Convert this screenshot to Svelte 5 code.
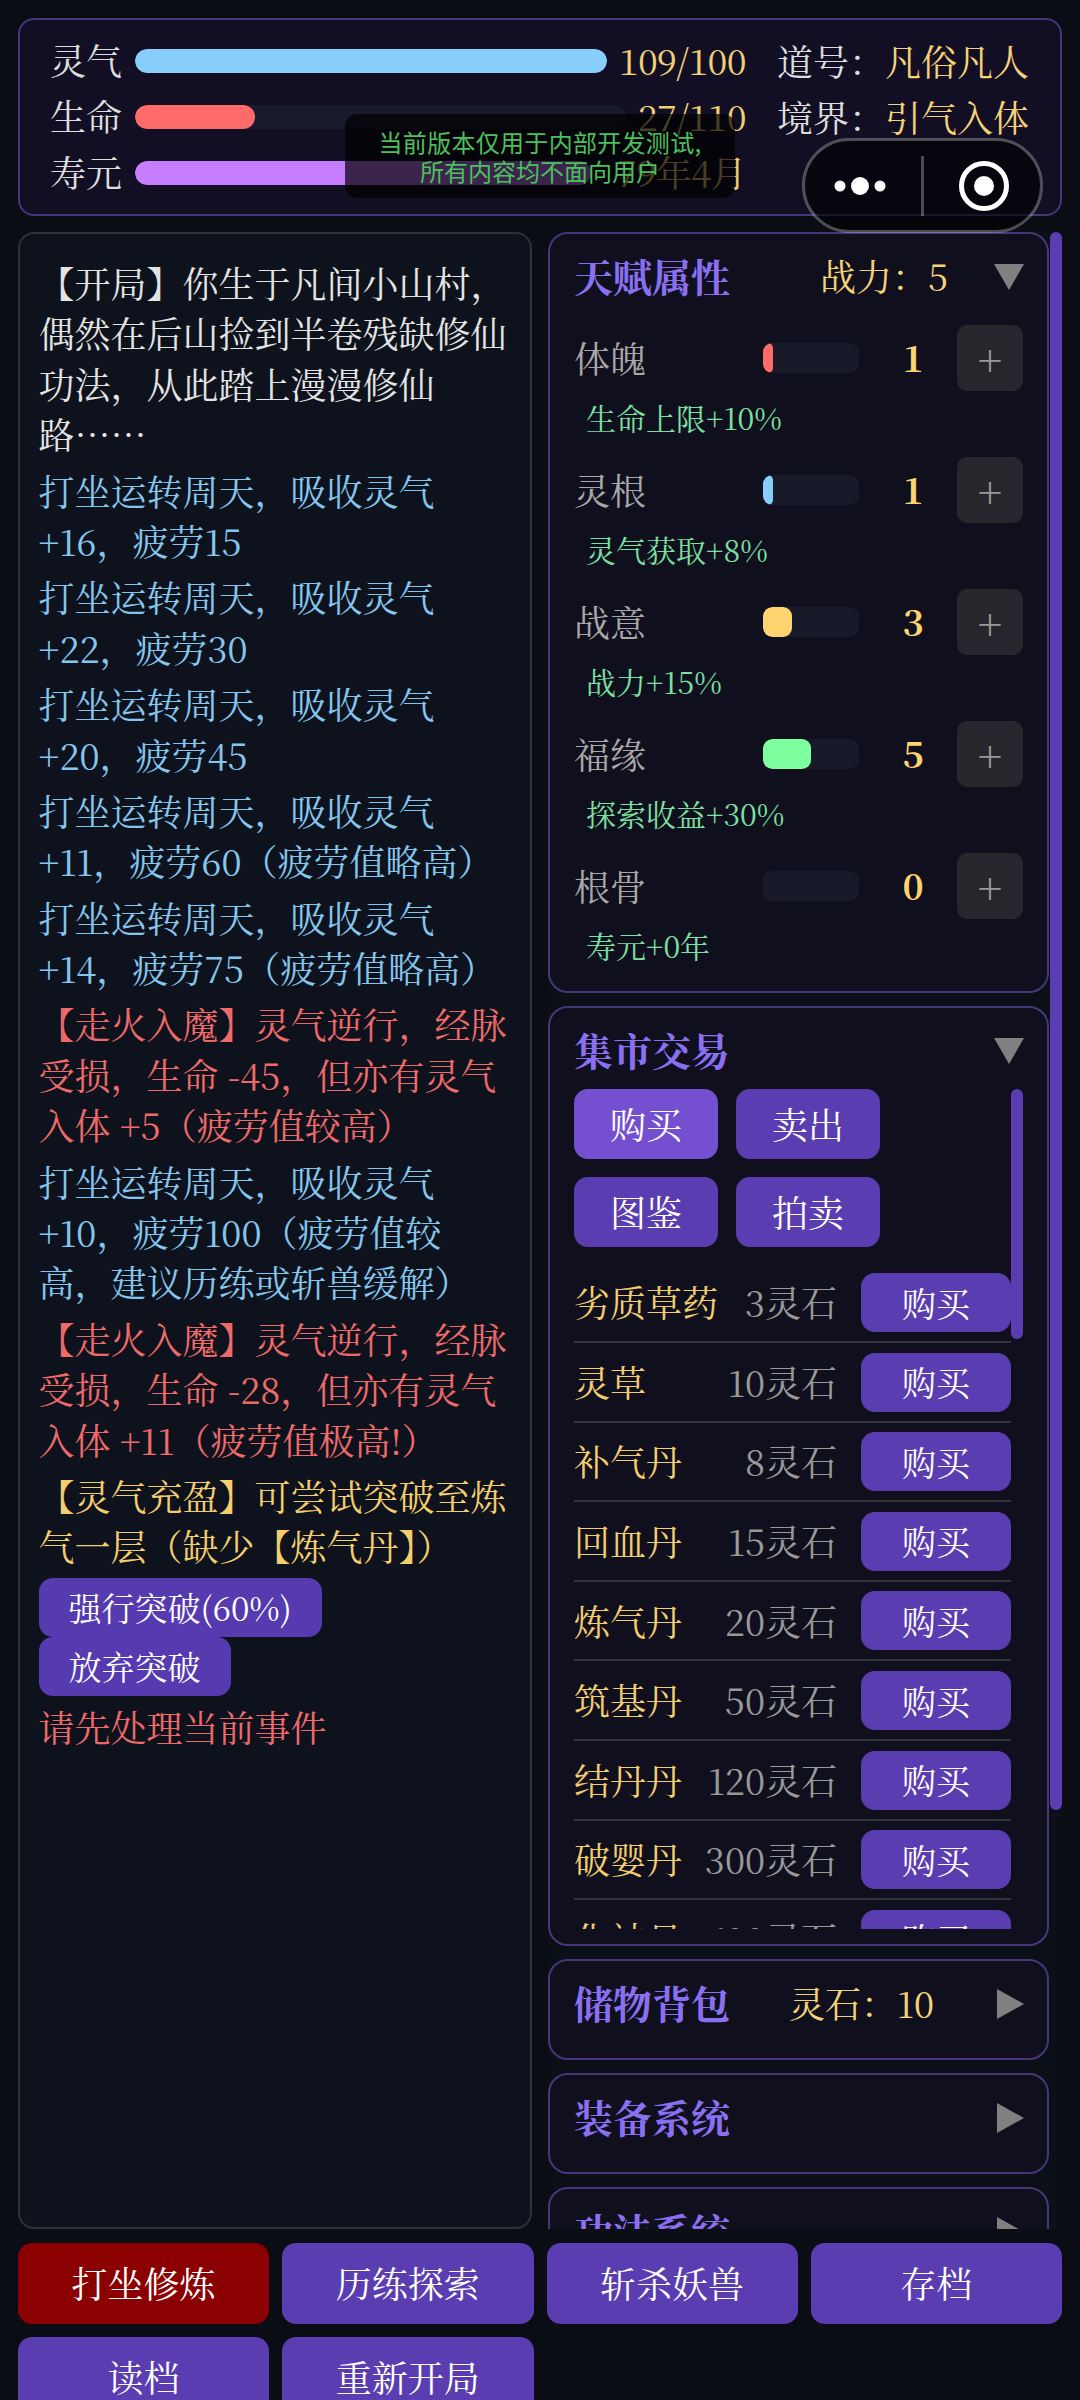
<script>
  const stats = [
    { name: '灵气', cls: 'qi', pct: 100, val: '109/100' },
    { name: '生命', cls: 'hp', pct: 24.5, val: '27/110' },
    { name: '寿元', cls: 'life', pct: 97, val: '79年4月' }
  ];
  const attrs = [
    { name: '体魄', color: '#ff6b6b', v: 1, fx: '生命上限+10%' },
    { name: '灵根', color: '#87cefa', v: 1, fx: '灵气获取+8%' },
    { name: '战意', color: '#ffd470', v: 3, fx: '战力+15%' },
    { name: '福缘', color: '#7dffa0', v: 5, fx: '探索收益+30%' },
    { name: '根骨', color: '#c77dff', v: 0, fx: '寿元+0年' }
  ];
  const goods = [
    ['劣质草药', 3], ['灵草', 10], ['补气丹', 8], ['回血丹', 15], ['炼气丹', 20],
    ['筑基丹', 50], ['结丹丹', 120], ['破婴丹', 300], ['化神丹', 600]
  ];
  const logs = [
    ['w', '【开局】你生于凡间小山村，偶然在后山捡到半卷残缺修仙功法，从此踏上漫漫修仙路……'],
    ['b', '打坐运转周天，吸收灵气+16，疲劳15'],
    ['b', '打坐运转周天，吸收灵气+22，疲劳30'],
    ['b', '打坐运转周天，吸收灵气+20，疲劳45'],
    ['b', '打坐运转周天，吸收灵气+11，疲劳60（疲劳值略高）'],
    ['b', '打坐运转周天，吸收灵气+14，疲劳75（疲劳值略高）'],
    ['r', '【走火入魔】灵气逆行，经脉受损，生命 -45，但亦有灵气入体 +5（疲劳值较高）'],
    ['b', '打坐运转周天，吸收灵气+10，疲劳100（疲劳值较高，建议历练或斩兽缓解）'],
    ['r', '【走火入魔】灵气逆行，经脉受损，生命 -28，但亦有灵气入体 +11（疲劳值极高!）'],
    ['g', '【灵气充盈】可尝试突破至炼气一层（缺少【炼气丹】）']
  ];
  const actions = ['打坐修炼', '历练探索', '斩杀妖兽', '存档', '读档', '重新开局'];
</script>

<div class="app">
  <header class="top">
    <div class="stats">
      {#each stats as s}
        <div class="stat">
          <span class="stat-name">{s.name}</span>
          <div class="track"><div class="fill {s.cls}" style="width:{s.pct}%"></div></div>
          <span class="stat-val">{s.val}</span>
        </div>
      {/each}
    </div>
    <div class="info">
      <div class="info-row"><span class="info-k">道号：</span><span class="gold">凡俗凡人</span></div>
      <div class="info-row"><span class="info-k">境界：</span><span class="gold">引气入体</span></div>
    </div>
  </header>

  <main class="main">
    <section class="log">
      {#each logs as l}
        <p class="line {l[0]}">{l[1]}</p>
      {/each}
      <div class="choices">
        <button class="choice">强行突破(60%)</button>
        <button class="choice">放弃突破</button>
      </div>
      <p class="line r">请先处理当前事件</p>
    </section>

    <section class="side">
      <div class="side-thumb"></div>

      <div class="panel attrs-panel">
        <div class="head">
          <h2>天赋属性</h2>
          <span class="gold head-gold power">战力：5</span>
          <svg class="tri-d" viewBox="0 0 30 26"><polygon points="0,0 30,0 15,26" /></svg>
        </div>
        {#each attrs as a}
          <div class="attr">
            <span class="attr-name">{a.name}</span>
            <div class="attr-track"><div class="attr-fill" style="width:{a.v * 10}%;background:{a.color}"></div></div>
            <span class="attr-val">{a.v}</span>
            <button class="plus">+</button>
          </div>
          <div class="fx">{a.fx}</div>
        {/each}
      </div>

      <div class="panel shop-panel">
        <div class="head">
          <h2>集市交易</h2>
          <svg class="tri-d" viewBox="0 0 30 26"><polygon points="0,0 30,0 15,26" /></svg>
        </div>
        <div class="shop">
          <div class="shop-thumb"></div>
          <div class="tabs">
            <button class="tab active">购买</button>
            <button class="tab">卖出</button>
            <button class="tab">图鉴</button>
            <button class="tab">拍卖</button>
          </div>
          <div class="goods">
            {#each goods as g}
              <div class="good">
                <span class="good-name">{g[0]}</span>
                <span class="good-price">{g[1]}灵石</span>
                <button class="buy">购买</button>
              </div>
            {/each}
          </div>
        </div>
      </div>

      <div class="panel closed">
        <div class="head">
          <h2>储物背包</h2>
          <span class="gold head-gold stones">灵石：10</span>
          <svg class="tri-r" viewBox="0 0 27 30"><polygon points="0,0 27,15 0,30" /></svg>
        </div>
      </div>
      <div class="panel closed">
        <div class="head">
          <h2>装备系统</h2>
          <svg class="tri-r" viewBox="0 0 27 30"><polygon points="0,0 27,15 0,30" /></svg>
        </div>
      </div>
      <div class="panel closed">
        <div class="head">
          <h2>功法系统</h2>
          <svg class="tri-r" viewBox="0 0 27 30"><polygon points="0,0 27,15 0,30" /></svg>
        </div>
      </div>
    </section>
  </main>

  <footer class="actions">
    {#each actions as a, i}
      <button class="action" class:hot={i === 0}>{a}</button>
    {/each}
  </footer>

  <div class="toast"><span class="toast-first">当前版本仅用于内部开发测试,</span><br />所有内容均不面向用户</div>

  <svg class="capsule" viewBox="0 0 241 95">
    <rect x="1.5" y="1.5" width="238" height="92" rx="46" fill="rgba(0,0,0,.6)" stroke="rgba(255,255,255,.28)" stroke-width="3" />
    <rect x="119" y="18" width="3" height="60" fill="rgba(255,255,255,.28)" />
    <circle cx="38" cy="48" r="5.5" fill="#fff" />
    <circle cx="58" cy="48" r="9" fill="#fff" />
    <circle cx="78" cy="48" r="5.5" fill="#fff" />
    <circle cx="182" cy="48" r="22.5" fill="none" stroke="#fff" stroke-width="5" />
    <circle cx="182" cy="48" r="10" fill="#fff" />
  </svg>
</div>

<style>
  :global(body) {
    margin: 0;
    background: #0a0d14;
  }
  .app {
    position: relative;
    width: 1080px;
    height: 2400px;
    overflow: hidden;
    box-sizing: border-box;
    padding: 18px 18px 0;
    background: #0a0d14;
    color: #e0e0e0;
    font-family: "Noto Serif CJK SC", "Noto Sans CJK SC", serif;
    font-size: 36px;
    line-height: 1.4;
  }
  button {
    font: inherit;
    color: #fff;
    border: 0;
    padding: 0;
    margin: 0;
    cursor: pointer;
  }
  p, h2 { margin: 0; }

  .top {
    box-sizing: border-box;
    height: 198px;
    padding: 16px 31px 16px 30px;
    display: flex;
    gap: 31px;
    background: #120f24;
    border: 2px solid #453779;
    border-radius: 16px;
  }
  .stats {
    flex: 1;
    display: flex;
    flex-direction: column;
    gap: 6px;
    min-width: 0;
  }
  .stat {
    display: flex;
    align-items: center;
    height: 50px;
  }
  .stat-name {
    width: 85px;
    flex: none;
    color: #ddd;
    padding-bottom: 2px;
  }
  .track {
    flex: 1;
    height: 24px;
    background: #1a1a2e;
    border-radius: 12px;
    overflow: hidden;
    margin-right: 12px;
  }
  .fill { height: 100%; border-radius: 12px; }
  .qi { background: #87cefa; }
  .hp { background: #ff6b6b; }
  .life { background: #c77dff; }
  .stat-val { color: #f0cf75; flex: none; letter-spacing: -0.6px; padding-bottom: 2px; }
  .info {
    flex: none;
    width: 252px;
    display: flex;
    flex-direction: column;
    gap: 6px;
  }
  .info-row {
    display: flex;
    height: 50px;
    white-space: nowrap;
  }
  .info-k { color: #ddd; }
  .gold { color: #f6d277; }

  .main {
    height: 1997px;
    margin-top: 16px;
    display: flex;
    gap: 16px;
  }
  .log {
    box-sizing: border-box;
    width: 514px;
    flex: none;
    padding: 24px 21px 24px 18.5px;
    background: #0e121c;
    border: 2px solid #2d3238;
    border-radius: 16px;
    overflow: hidden;
  }
  .line { margin-bottom: 6px; }
  .w { color: #e4e4e4; }
  .b { color: #84c6ee; }
  .r { color: #ee6a6a; }
  .g { color: #f3cd6e; }
  .choices {
    display: flex;
    flex-direction: column;
    align-items: flex-start;
    margin-bottom: 6px;
  }
  .choice {
    height: 59px;
    padding: 0 30px;
    background: #553ab0;
    border-radius: 14px;
    font-size: 33px;
  }

  .side {
    position: relative;
    width: 514px;
    flex: none;
    overflow: hidden;
    background: #0b0f17;
    padding-right: 13px;
    box-sizing: border-box;
    display: flex;
    flex-direction: column;
    gap: 13px;
  }
  .side-thumb {
    position: absolute;
    right: 0;
    top: 0;
    width: 12px;
    height: 1578px;
    background: #5a3db0;
    border-radius: 6px;
  }
  .panel {
    flex: none;
    box-sizing: border-box;
    padding: 23px 24px 25px;
    background: #0f0f1e;
    border: 2px solid #453779;
    border-radius: 20px;
  }
  .head {
    display: flex;
    align-items: center;
    height: 40px;
  }
  h2 {
    font-size: 39px;
    font-weight: 700;
    color: #8a70f0;
    line-height: 40px;
    flex: none;
    padding-bottom: 4px;
  }
  .head-gold { margin-left: auto; padding-bottom: 2px; }
  .power { margin-right: 46px; }
  .stones { margin-right: 63px; }
  .tri-d { width: 30px; height: 26px; flex: none; margin: 0 -1px 0 auto; fill: #808080; }
  .head-gold + .tri-d, .head-gold + .tri-r { margin-left: 0; }
  .tri-r { width: 27px; height: 30px; flex: none; margin: 0 -1px 0 auto; fill: #808080; }

  .attrs-panel { height: 761px; }
  .attrs-panel .head { margin-bottom: 28px; }
  .attr {
    display: flex;
    align-items: center;
    height: 66px;
  }
  .attr-name { width: 189px; color: #a8a8a8; flex: none; }
  .attr-track {
    width: 96px;
    height: 30px;
    background: #181a2a;
    border-radius: 9px;
    overflow: hidden;
    flex: none;
  }
  .attr-fill { height: 100%; border-radius: 9px; }
  .attr-val {
    flex: 1;
    text-align: center;
    padding: 0 0 2px 10px;
    font-weight: 700;
    color: #ffd470;
  }
  .plus {
    width: 66px;
    height: 66px;
    flex: none;
    background: #26272c;
    border-radius: 10px;
    color: #999;
    font-size: 42px;
    line-height: 62px;
  }
  .fx {
    height: 42px;
    margin: 5px 0 19px;
    padding-left: 12px;
    font-size: 30px;
    line-height: 42px;
    color: #7be0a0;
  }

  .shop-panel { height: 940px; padding-bottom: 15px; }
  .shop-panel .head { margin-bottom: 18px; }
  .shop {
    position: relative;
    height: 840px;
    overflow: hidden;
    padding-right: 12px;
  }
  .shop-thumb {
    position: absolute;
    right: 0;
    top: 0;
    width: 12px;
    height: 250px;
    background: #5a3db0;
    border-radius: 6px;
  }
  .tabs {
    display: grid;
    grid-template-columns: 144px 144px;
    gap: 18px;
  }
  .tab {
    height: 70px;
    background: #5a3db0;
    border-radius: 14px;
  }
  .tab.active { background: #7450d0; }
  .goods { margin-top: 26px; }
  .good {
    display: flex;
    align-items: center;
    padding-bottom: 9px;
    border-bottom: 2px solid #33343c;
    margin-bottom: 9.6px;
  }
  .good-name { color: #f3cd6e; white-space: nowrap; }
  .good-price {
    margin-left: auto;
    color: #999;
    white-space: nowrap;
  }
  .buy {
    width: 150px;
    height: 59px;
    margin-left: 24px;
    flex: none;
    background: #5a3db0;
    border-radius: 14px;
    font-size: 34px;
  }
  .closed { height: 101px; }

  .actions {
    margin-top: 14px;
    display: grid;
    grid-template-columns: repeat(4, 1fr);
    gap: 13px;
  }
  .action {
    height: 81px;
    background: #5a3db0;
    border-radius: 14px;
  }
  .action.hot { background: #8b0000; }

  .toast {
    position: absolute;
    left: 345px;
    top: 114px;
    width: 390px;
    height: 84px;
    box-sizing: border-box;
    padding-top: 13px;
    background: rgba(0, 0, 0, 0.7);
    border-radius: 12px;
    text-align: center;
    font-family: "Noto Sans CJK SC", sans-serif;
    font-size: 24px;
    line-height: 29px;
    color: #4cc05c;
  }
  .toast-first { letter-spacing: 0.3px; }
  .capsule {
    position: absolute;
    left: 802px;
    top: 138px;
    width: 241px;
    height: 95px;
  }
</style>
